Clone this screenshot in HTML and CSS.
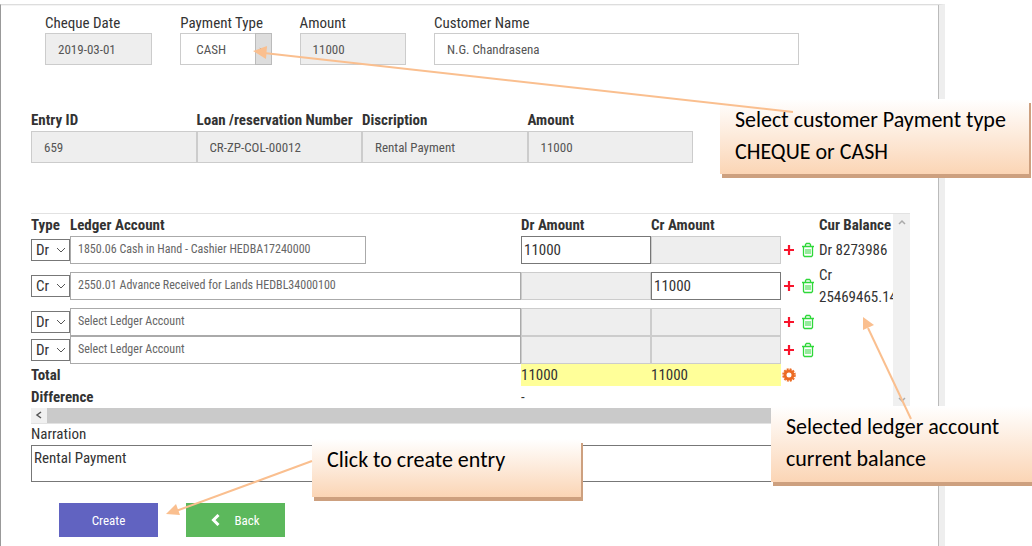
FILE: index.html
```html
<!DOCTYPE html>
<html lang="en">
<head>
  <meta charset="UTF-8">
  <meta name="viewport" content="width=device-width, initial-scale=1">
  <title>Payment Entry</title>
  <link rel="stylesheet" href="styles.css">
</head>
<body>
  <!-- Shared icons -->
  <svg class="sprite" aria-hidden="true">
    <symbol id="chevron" viewBox="0 0 10 6"><path d="M1 1l4 4 4-4" fill="none" stroke="currentColor"/></symbol>
    <symbol id="plus" viewBox="0 0 12 12"><path d="M6 1v10M1 6h10" fill="none" stroke="#f8142c" stroke-width="2.200"/></symbol>
    <symbol id="trash" viewBox="0 0 14 16">
      <path d="M1 4.500h12M4.500 4.500v-2l1-1h3l1 1v2M2.500 4.500v9l1 1h7l1-1v-9" fill="none" stroke="#2fd83a" stroke-width="1.300"/>
      <path d="M5 7v5M7 7v5M9 7v5" fill="none" stroke="#2fd83a"/>
    </symbol>
  </svg>

  <form class="page">
    <!-- Payment details -->
    <div class="payment">
      <div class="field">
        <label for="chequeDate">Cheque Date</label>
        <input class="control readonly" id="chequeDate" value="2019-03-01" readonly>
      </div>
      <div class="field">
        <label for="payType">Payment Type</label>
        <div class="pay-select">
          <select class="control" id="payType">
            <option>CASH</option>
            <option>CHEQUE</option>
          </select>
          <span class="arrow-box"><svg width="8" height="5"><use href="#chevron"/></svg></span>
        </div>
      </div>
      <div class="field">
        <label for="amount">Amount</label>
        <input class="control readonly" id="amount" value="11000" readonly>
      </div>
      <div class="field">
        <label for="customer">Customer Name</label>
        <input class="control" id="customer" value="N.G. Chandrasena">
      </div>
    </div>

    <!-- Entry row -->
    <table class="entry">
      <thead>
        <tr><th>Entry ID</th><th>Loan /reservation Number</th><th>Discription</th><th>Amount</th></tr>
      </thead>
      <tbody>
        <tr>
          <td><input class="control readonly" aria-label="Entry ID" value="659" readonly></td>
          <td><input class="control readonly" aria-label="Loan /reservation Number" value="CR-ZP-COL-00012" readonly></td>
          <td><input class="control readonly" aria-label="Discription" value="Rental Payment" readonly></td>
          <td><input class="control readonly" aria-label="Amount" value="11000" readonly></td>
        </tr>
      </tbody>
    </table>

    <!-- Ledger -->
    <div class="ledger-box">
      <div class="ledger-main">
        <div class="ledger-view">
          <table class="ledger">
            <colgroup>
              <col class="col-type"><col><col class="col-amount"><col class="col-amount">
              <col class="col-icon"><col class="col-icon"><col class="col-balance">
            </colgroup>
            <thead>
              <tr><th>Type</th><th>Ledger Account</th><th>Dr Amount</th><th>Cr Amount</th><th></th><th></th><th>Cur Balance</th></tr>
            </thead>
            <tbody>
              <tr>
                <td><div class="type"><select aria-label="Type"><option>Dr</option><option>Cr</option></select><svg width="10" height="6"><use href="#chevron"/></svg></div></td>
                <td><input class="account short" aria-label="Ledger Account" value="1850.06 Cash in Hand - Cashier HEDBA17240000"></td>
                <td><input class="money" aria-label="Dr Amount" value="11000"></td>
                <td><input class="money" aria-label="Cr Amount" disabled></td>
                <td><button class="icon" type="button" aria-label="Add"><svg width="12" height="12"><use href="#plus"/></svg></button></td>
                <td><button class="icon" type="button" aria-label="Delete"><svg width="14" height="16"><use href="#trash"/></svg></button></td>
                <td>Dr 8273986</td>
              </tr>
              <tr>
                <td><div class="type"><select aria-label="Type"><option>Cr</option><option>Dr</option></select><svg width="10" height="6"><use href="#chevron"/></svg></div></td>
                <td><input class="account" aria-label="Ledger Account" value="2550.01 Advance Received for Lands HEDBL34000100"></td>
                <td><input class="money" aria-label="Dr Amount" disabled></td>
                <td><input class="money" aria-label="Cr Amount" value="11000"></td>
                <td><button class="icon" type="button" aria-label="Add"><svg width="12" height="12"><use href="#plus"/></svg></button></td>
                <td><button class="icon" type="button" aria-label="Delete"><svg width="14" height="16"><use href="#trash"/></svg></button></td>
                <td>Cr 25469465.14</td>
              </tr>
              <tr>
                <td><div class="type"><select aria-label="Type"><option>Dr</option><option>Cr</option></select><svg width="10" height="6"><use href="#chevron"/></svg></div></td>
                <td><input class="account" aria-label="Ledger Account" value="Select Ledger Account"></td>
                <td><input class="money" aria-label="Dr Amount" disabled></td>
                <td><input class="money" aria-label="Cr Amount" disabled></td>
                <td><button class="icon" type="button" aria-label="Add"><svg width="12" height="12"><use href="#plus"/></svg></button></td>
                <td><button class="icon" type="button" aria-label="Delete"><svg width="14" height="16"><use href="#trash"/></svg></button></td>
                <td></td>
              </tr>
              <tr>
                <td><div class="type"><select aria-label="Type"><option>Dr</option><option>Cr</option></select><svg width="10" height="6"><use href="#chevron"/></svg></div></td>
                <td><input class="account" aria-label="Ledger Account" value="Select Ledger Account"></td>
                <td><input class="money" aria-label="Dr Amount" disabled></td>
                <td><input class="money" aria-label="Cr Amount" disabled></td>
                <td><button class="icon" type="button" aria-label="Add"><svg width="12" height="12"><use href="#plus"/></svg></button></td>
                <td><button class="icon" type="button" aria-label="Delete"><svg width="14" height="16"><use href="#trash"/></svg></button></td>
                <td></td>
              </tr>
            </tbody>
            <tfoot>
              <tr>
                <th colspan="2">Total</th>
                <td class="sum">11000</td>
                <td class="sum">11000</td>
                <td><button class="icon" type="button" aria-label="Recalculate"><svg width="14" height="14" viewBox="0 0 14 14"><circle cx="7" cy="7" r="4" fill="none" stroke="#ec6b23" stroke-width="3"/><circle cx="7" cy="7" r="6" fill="none" stroke="#ec6b23" stroke-width="1.500" stroke-dasharray="2 1.140"/></svg></button></td>
                <td></td>
                <td></td>
              </tr>
              <tr><th colspan="2">Difference</th><td>-</td><td></td><td></td><td></td><td></td></tr>
            </tfoot>
          </table>
        </div>
        <div class="vscroll">
          <svg width="8" height="14" viewBox="0 0 8 14"><path d="M1 10l3-3 3 3" fill="none" stroke="#aaa" stroke-width="1.500"/></svg>
          <svg width="8" height="14" viewBox="0 0 8 14"><path d="M1 4l3 3 3-3" fill="none" stroke="#aaa" stroke-width="1.500"/></svg>
        </div>
      </div>
      <div class="hscroll">
        <svg width="16" height="14" viewBox="0 0 16 14"><path d="M10 4L6 7l4 3" fill="none" stroke="#555" stroke-width="1.500"/></svg>
        <div class="thumb"></div>
      </div>
    </div>

    <!-- Narration -->
    <label class="narration-label" for="narration">Narration</label>
    <textarea id="narration">Rental Payment</textarea>

    <div class="buttons">
      <button class="btn create" type="button">Create</button>
      <button class="btn back" type="button">
        <svg width="9" height="12" viewBox="0 0 9 12"><path d="M7.500 1L2.500 6l5 5" fill="none" stroke="#fff" stroke-width="3"/></svg>
        Back
      </button>
    </div>
  </form>

  <!-- Help callouts -->
  <div class="callout callout-type">Select customer Payment type<br>CHEQUE or CASH</div>
  <div class="callout callout-balance">Selected ledger account<br>current balance</div>
  <div class="callout callout-create">Click to create entry</div>
  <svg class="pointers" width="1032" height="546" aria-hidden="true">
    <g stroke="#fabf8f" stroke-width="2">
      <path d="M793 112L264 53"/>
      <path d="M911 419L868 328"/>
      <path d="M312 461L176 511"/>
    </g>
    <g fill="#fabf8f">
      <path d="M253 51l14-5-1 13z"/>
      <path d="M863 317l11 8-11 5z"/>
      <path d="M166 514l10-10 4 11z"/>
    </g>
  </svg>
</body>
</html>
```
FILE: styles.css
```css
* {
  box-sizing: border-box;
}
body {
  margin: 0;
  padding: 4px 87px 0 0;
  background: #fff;
  color: #333;
  font-family: "Roboto Condensed", "Liberation Sans Narrow", Roboto, sans-serif;
  font-size: 15px;
  line-height: 22px;
  position: relative;
  overflow: hidden;
}
input, select, textarea, button {
  margin: 0;
  color: inherit;
  font-family: inherit;
  border-radius: 0;
}
.sprite {
  display: none;
}
.page {
  min-height: calc(100vh - 4px);
  padding: 8px 29px 0 30px;
  border-top: 1px solid #ddd;
  border-left: 1px solid #999;
  border-right: 6px solid #eee;
  box-shadow: inset -1px 0 #bbb, inset 0 1px #f4f4f4;
}

/* Payment details */
.payment {
  display: grid;
  grid-template-columns: 107fr 91fr 106fr 364fr;
  column-gap: 28px;
  padding: 0 111px 0 14px;
}
.field label {
  display: block;
  height: 20px;
  line-height: 20px;
  white-space: nowrap;
}
.control {
  display: block;
  width: 100%;
  height: 32px;
  padding: 0 12px;
  border: 1px solid #ccc;
  background: #fff;
  color: #555;
  font-size: 13px;
}
.readonly {
  background: #eee;
}
.pay-select {
  display: grid;
}
.pay-select select {
  grid-area: 1 / 1;
  appearance: none;
  padding: 0 15px;
}
.arrow-box {
  grid-area: 1 / 1;
  justify-self: end;
  width: 17px;
  display: flex;
  align-items: center;
  justify-content: center;
  border: 1px solid #bbb;
  background: #ddd;
  color: #888;
  pointer-events: none;
}

/* Entry row */
table {
  border-collapse: collapse;
  table-layout: fixed;
}
th, td {
  padding: 0;
  text-align: left;
}
th {
  white-space: nowrap;
}
.entry {
  width: calc(100% - 217px);
  margin-top: 44px;
}

/* Ledger */
.ledger-box {
  margin-top: 50px;
  border: 1px solid #e2e2e2;
  border-left-width: 0;
  border-right-width: 0;
}
.ledger-main {
  display: flex;
}
.ledger-view {
  flex: 1;
  overflow: hidden;
}
.ledger {
  width: 100%;
}
.col-type {
  width: 39px;
}
.col-amount {
  width: 130px;
}
.col-icon {
  width: 19px;
}
.col-balance {
  width: 74px;
}
.type {
  display: grid;
  align-items: center;
  color: #555;
}
.type select {
  grid-area: 1 / 1;
  appearance: none;
  width: 100%;
  height: 22px;
  padding: 0 4px;
  border: 1px solid #777;
  background: #fff;
  color: #333;
  font-size: 15px;
}
.type svg {
  grid-area: 1 / 1;
  justify-self: end;
  margin-right: 4px;
  pointer-events: none;
}
.account, .money {
  display: block;
  width: 100%;
  height: 28px;
  border: 1px solid #aaa;
  background: #fff;
}
.account {
  padding: 0 7px 3px;
  color: #666;
  font-size: 12px;
}
.short {
  width: 296px;
}
.money {
  padding: 0 2px;
  border-color: #777;
  font-size: 15px;
}
.money:disabled {
  border-color: #ccc;
  background: #eee;
}
.icon {
  display: flex;
  align-items: center;
  justify-content: center;
  width: 16px;
  height: 18px;
  padding: 0;
  border: 0;
  background: none;
}
.sum {
  background: #ff9;
}
.vscroll {
  width: 17px;
  display: flex;
  flex-direction: column;
  align-items: center;
  justify-content: space-between;
  background: #f0f0f0;
}
.hscroll {
  display: flex;
  height: 15px;
  background: #f0f0f0;
}
.thumb {
  flex: 1;
  margin-right: 17px;
  background: #cacaca;
}

/* Narration */
.narration-label {
  display: block;
  line-height: 21px;
}
textarea {
  display: block;
  width: 100%;
  height: 37px;
  padding: 1px 2px;
  border: 1px solid #777;
  background: #fff;
  font-size: 15px;
  line-height: 22px;
  resize: none;
}
.buttons {
  display: flex;
  gap: 28px;
  padding: 21px 28px 0;
}
.btn {
  display: flex;
  align-items: center;
  justify-content: center;
  gap: 14px;
  width: 99px;
  height: 34px;
  padding: 0;
  border: 0;
  color: #fff;
  font-size: 13px;
}
.create {
  background: #6163c1;
}
.back {
  background: #5cb85c;
}

/* Callouts lie over the form */
.callout {
  position: absolute;
  padding: 5px 15px;
  background: linear-gradient(#fff, #fbd5b5);
  box-shadow: 2px 4px #cda07f;
  color: #000;
  font-family: Carlito, Lato, sans-serif;
  font-size: 22px;
  line-height: 32px;
  white-space: nowrap;
}
.callout-type {
  top: 99px;
  left: 720px;
  width: 309px;
  height: 75px;
}
.callout-balance {
  top: 406px;
  left: 771px;
  width: 269px;
  height: 76px;
}
.callout-create {
  top: 439px;
  left: 312px;
  width: 269px;
  height: 58px;
}
.pointers {
  position: absolute;
  top: 0;
  left: 0;
  pointer-events: none;
}
```
